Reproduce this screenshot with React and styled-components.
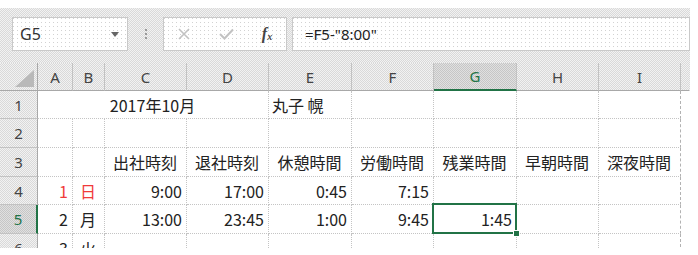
import React from 'react';
import styled, { createGlobalStyle, css } from 'styled-components';

const GlobalStyle = createGlobalStyle`
  html, body {
    margin: 0;
    padding: 0;
    background: #fff;
  }
  body {
    font-family: "Noto Sans CJK JP", "Noto Sans", sans-serif;
  }
`;

// dithered grey, like the gif of the original
const checker = (a, b) => css`
  background: repeating-conic-gradient(${a} 0 25%, ${b} 0 50%) 0 0 / 2px 2px;
`;

const speckled = css`
  background-color: #fff;
  background-image: conic-gradient(at 1px 1px, transparent 75%, #d2d2d2 0);
  background-size: 4px 4px;
`;

const GREEN = '#217346';

const Frame = styled.div`
  width: 690px;
  height: 240px;
  margin-top: 8px;
  overflow: hidden;
`;

const Toolbar = styled.div`
  display: flex;
  align-items: flex-start;
  padding: 9px 0 12px 12px;
  ${checker('#d9d9d9', '#f2f2f2')}
`;

const Box = styled.div`
  box-sizing: border-box;
  height: 34px;
  border: 1px solid #c9c9c9;
  display: flex;
  align-items: center;
  ${speckled}
`;

const NameBox = styled(Box)`
  width: 116px;
  padding: 0 8px 0 7px;
  justify-content: space-between;
  font-family: "Noto Sans", sans-serif;
  font-size: 16px;
  color: #333;
`;

const DropArrow = styled.span`
  width: 0;
  height: 0;
  border-left: 4px solid transparent;
  border-right: 4px solid transparent;
  border-top: 5px solid #666;
`;

const Splitter = styled.div`
  width: 35px;
  height: 34px;
  display: flex;
  flex-direction: column;
  align-items: center;
  justify-content: center;
  gap: 2px;
`;

const Dot = styled.span`
  width: 2px;
  height: 2px;
  background: #9a9a9a;
`;

const FxBox = styled(Box)`
  width: 124px;
`;

const IconSlot = styled.div`
  width: ${p => p.$w}px;
  display: flex;
  justify-content: center;
  align-items: center;
`;

const FxLabel = styled.span`
  font-family: "Liberation Serif", serif;
  font-style: italic;
  font-weight: bold;
  font-size: 16px;
  color: #444;
  sub {
    font-size: 10px;
    vertical-align: -1px;
  }
`;

const FormulaBox = styled(Box)`
  flex: 1;
  margin-left: 5px;
  padding-left: 12px;
  font-family: "Noto Sans", sans-serif;
  font-size: 15px;
  color: #222;
`;

const Sheet = styled.div`
  display: grid;
  grid-template-columns: 38px 35px 32px 82px 82px 83px 82px 83px 82px 82px 9px;
  grid-template-rows: 28px 28px 29px 29px 28px 29px 28px;
`;

const headBase = css`
  box-sizing: border-box;
  display: flex;
  align-items: center;
  justify-content: center;
  font-family: "Noto Sans", sans-serif;
  font-size: 15px;
  color: #444;
`;

const Corner = styled.div`
  ${headBase}
  ${checker('#d9d9d9', '#f2f2f2')}
  border-right: 1px solid #a8a8a8;
  border-bottom: 1px solid #a8a8a8;
  justify-content: flex-end;
  align-items: flex-end;
  padding: 0 3px 3px 0;
`;

const ColHead = styled.div`
  ${headBase}
  ${p => (p.$selected ? checker('#c6c6c6', '#e0e0e0') : checker('#d9d9d9', '#f2f2f2'))}
  border-right: 1px solid ${p => (p.$edge ? 'transparent' : '#c2c2c2')};
  border-bottom: ${p => (p.$selected ? `2px solid ${GREEN}` : '1px solid #a8a8a8')};
  color: ${p => (p.$selected ? GREEN : '#444')};
`;

const RowHead = styled.div`
  ${headBase}
  ${p => (p.$selected ? checker('#c6c6c6', '#e0e0e0') : checker('#d9d9d9', '#f2f2f2'))}
  border-bottom: 1px solid #c2c2c2;
  border-right: ${p => (p.$selected ? `2px solid ${GREEN}` : '1px solid #a8a8a8')};
  color: ${p => (p.$selected ? GREEN : '#444')};
`;

const Cell = styled.div`
  box-sizing: border-box;
  position: relative;
  display: flex;
  align-items: center;
  justify-content: ${p =>
    p.$align === 'left' ? 'flex-start' : p.$align === 'center' ? 'center' : 'flex-end'};
  padding: 0 4px 0 3px;
  grid-column: span ${p => p.$span || 1};
  border-right: 1px ${p => (p.$last ? 'dashed #b2b2b2' : p.$merged ? 'solid transparent' : 'dotted #c4c4c4')};
  border-bottom: 1px dotted #c4c4c4;
  font-size: 16px;
  color: ${p => (p.$red ? '#f03a3a' : '#222')};
  white-space: nowrap;

  ${p =>
    p.$active &&
    css`
      &::after {
        content: '';
        position: absolute;
        left: -2px;
        top: -2px;
        right: -1px;
        bottom: -1px;
        border: 2px solid ${GREEN};
        pointer-events: none;
      }
      &::before {
        content: '';
        position: absolute;
        right: -4px;
        bottom: -4px;
        width: 5px;
        height: 5px;
        background: ${GREEN};
        border: 1px solid #fff;
        z-index: 1;
      }
    `}
`;

const Outside = styled.div`
  background: #fff;
`;

const columns = ['A', 'B', 'C', 'D', 'E', 'F', 'G', 'H', 'I'];

const blank = () => Array.from({ length: 9 }, () => ({}));

const num = t => ({ t, a: 'right' });
const head = t => ({ t, a: 'center' });

const rows = [
  {
    n: 1,
    cells: [
      { t: '2017年10月', a: 'center', span: 4 },
      { t: '丸子 幌', a: 'left' },
      {}, {}, {}, {},
    ],
  },
  { n: 2, cells: blank() },
  {
    n: 3,
    cells: [
      {}, {},
      head('出社時刻'), head('退社時刻'), head('休憩時間'), head('労働時間'),
      head('残業時間'), head('早朝時間'), head('深夜時間'),
    ],
  },
  {
    n: 4,
    cells: [
      { t: '1', a: 'right', red: true },
      { t: '日', a: 'center', red: true },
      num('9:00'), num('17:00'), num('0:45'), num('7:15'), {}, {}, {},
    ],
  },
  {
    n: 5,
    selected: true,
    cells: [
      num('2'), head('月'),
      num('13:00'), num('23:45'), num('1:00'), num('9:45'),
      { t: '1:45', a: 'right', active: true },
      {}, {},
    ],
  },
  {
    n: 6,
    cells: [num('3'), head('火'), {}, {}, {}, {}, {}, {}, {}],
  },
];

const CornerTriangle = () => (
  <svg width="19" height="17" viewBox="0 0 19 17">
    <polygon points="19,0 19,17 0,17" fill="#b9b9b9" />
  </svg>
);

const CrossIcon = () => (
  <svg width="12" height="12" viewBox="0 0 12 12">
    <path d="M1 1 L11 11 M11 1 L1 11" stroke="#c2c2c2" strokeWidth="1.6" fill="none" />
  </svg>
);

const CheckIcon = () => (
  <svg width="15" height="12" viewBox="0 0 15 12">
    <path d="M1 6 L5.5 10.5 L14 1.5" stroke="#c2c2c2" strokeWidth="2" fill="none" />
  </svg>
);

const App = () => {
  return (
    <>
      <GlobalStyle />
      <Frame>
        <Toolbar>
          <NameBox>
            <span>G5</span>
            <DropArrow />
          </NameBox>
          <Splitter>
            <Dot />
            <Dot />
            <Dot />
          </Splitter>
          <FxBox>
            <IconSlot $w={40}>
              <CrossIcon />
            </IconSlot>
            <IconSlot $w={44}>
              <CheckIcon />
            </IconSlot>
            <IconSlot $w={38}>
              <FxLabel>
                f<sub>x</sub>
              </FxLabel>
            </IconSlot>
          </FxBox>
          <FormulaBox>=F5-"8:00"</FormulaBox>
        </Toolbar>

        <Sheet>
          <Corner>
            <CornerTriangle />
          </Corner>
          {columns.map(c => (
            <ColHead key={c} $selected={c === 'G'}>
              {c}
            </ColHead>
          ))}
          <ColHead $edge />

          {rows.map(row => (
            <React.Fragment key={row.n}>
              <RowHead $selected={row.selected}>{row.n}</RowHead>
              {row.cells.map((c, i) => {
                const isLast = i === row.cells.length - 1;
                return (
                  <Cell
                    key={i}
                    $align={c.a}
                    $red={c.red}
                    $span={c.span}
                    $active={c.active}
                    $last={isLast}
                  >
                    {c.t}
                  </Cell>
                );
              })}
              <Outside />
            </React.Fragment>
          ))}
        </Sheet>
      </Frame>
    </>
  );
};

export default App;
